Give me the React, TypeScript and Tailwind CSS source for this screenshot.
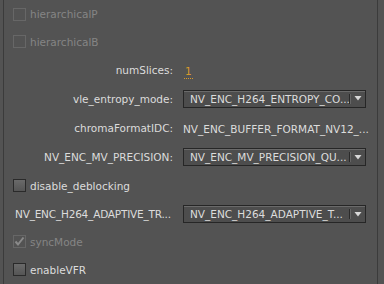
import React from "react";

const font = { fontFamily: '"DejaVu Sans", Verdana, sans-serif' };

function Check({ label, disabled, checked }: { label: string; disabled?: boolean; checked?: boolean }) {
  return (
    <div className="flex items-center pl-[9px]">
      <div
        className={
          "w-[13px] h-[13px] border flex items-center justify-center " +
          (disabled
            ? "border-[#676767] bg-[#535353]"
            : "border-[#2a2a2a] bg-gradient-to-b from-[#6a6a6a] to-[#555555]")
        }
      >
        {checked && (
          <svg width="11" height="11" viewBox="0 0 11 11">
            <path d="M1.5 5.5 L4 8.5 L9.5 1.5" stroke="#8a8a8a" strokeWidth="2" fill="none" />
          </svg>
        )}
      </div>
      <span className={"ml-[4px] text-[10.5px] leading-[14px] " + (disabled ? "text-[#858585]" : "text-[#dcdcdc]")}>
        {label}
      </span>
    </div>
  );
}

function Combo({ value }: { value: string }) {
  return (
    <div className="w-[183px] h-[18px] border border-[#262626] bg-[#4d4d4d] flex shadow-[inset_0_1px_0_#6a6a6a]">
      <div className="flex-1 min-w-0 pl-[6px] flex items-center text-[10.5px] text-[#dcdcdc] leading-[14px] whitespace-nowrap overflow-hidden">
        {value}
      </div>
      <div className="w-[1px] my-[3px] bg-[#2a2a2a]" />
      <div className="w-[1px] my-[3px] bg-[#666666]" />
      <div className="w-[14px] flex items-center justify-center">
        <svg width="8" height="5" viewBox="0 0 8 5">
          <path d="M0.5 0 H7.5 L4 4.5 Z" fill="#d8d8d8" />
        </svg>
      </div>
    </div>
  );
}

function Field({ label, children, leftAlign }: { label: string; children: React.ReactNode; leftAlign?: boolean }) {
  return (
    <div className="flex items-center">
      <div
        className={
          "w-[169px] pl-[11px] text-[10.5px] leading-[14px] text-[#dcdcdc] whitespace-nowrap " +
          (leftAlign ? "text-left tracking-[-0.2px]" : "text-right")
        }
      >
        {label}
      </div>
      <div className="ml-[10px]">{children}</div>
    </div>
  );
}

export default function App() {
  return (
    <div className="w-[384px] h-[284px] bg-[#535353] flex overflow-hidden" style={font}>
      <div className="w-[3px]" />
      <div className="w-[1px] bg-[#3b3b3b]" />
      <div className="w-[373px] flex flex-col">
        <div className="h-[28px] flex items-center"><Check label="hierarchicalP" disabled /></div>
        <div className="h-[27px] flex items-center"><Check label="hierarchicalB" disabled /></div>
        <div className="h-[29px] flex items-center">
          <Field label="numSlices:">
            <span className="text-[10.5px] leading-[13px] text-[#d99a2b] border-b border-dotted border-[#d99a2b] px-[1px] ml-[1px] inline-block">1</span>
          </Field>
        </div>
        <div className="h-[29px] flex items-center">
          <Field label="vle_entropy_mode:"><Combo value="NV_ENC_H264_ENTROPY_CO..." /></Field>
        </div>
        <div className="h-[30px] flex items-center">
          <Field label="chromaFormatIDC:">
            <span className="text-[10.5px] leading-[14px] text-[#dcdcdc] whitespace-nowrap">NV_ENC_BUFFER_FORMAT_NV12_...</span>
          </Field>
        </div>
        <div className="h-[28px] flex items-center">
          <Field label="NV_ENC_MV_PRECISION:"><Combo value="NV_ENC_MV_PRECISION_QU..." /></Field>
        </div>
        <div className="h-[29px] flex items-center"><Check label="disable_deblocking" /></div>
        <div className="h-[28px] flex items-center">
          <Field label="NV_ENC_H264_ADAPTIVE_TR..." leftAlign><Combo value="NV_ENC_H264_ADAPTIVE_T..." /></Field>
        </div>
        <div className="h-[27px] flex items-center"><Check label="syncMode" disabled checked /></div>
        <div className="h-[29px] flex items-center"><Check label="enableVFR" /></div>
      </div>
      <div className="w-[1px] bg-[#3b3b3b]" />
      <div className="flex-1" />
    </div>
  );
}
